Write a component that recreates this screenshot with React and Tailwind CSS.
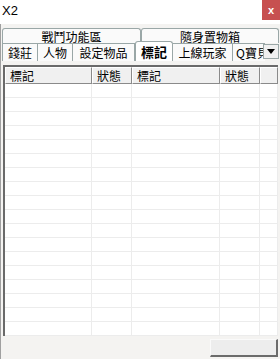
import React from "react";

const font = { fontFamily: '"Noto Sans CJK TC", "Noto Sans CJK SC", sans-serif' };

function TopTab({ children, w }) {
  return (
    <div
      className={`${w} h-[15px] border border-b-0 border-[#9aa7a7] rounded-t-[3px] bg-[#fafafa] flex items-start justify-center pt-[1px] text-[12px] leading-[13px] text-black`}
    >
      {children}
    </div>
  );
}

function Tab({ children, w, selected }) {
  if (selected) {
    return (
      <div
        className={`${w} h-[20px] border border-b-0 border-[#9aa7a7] rounded-t-[3px] bg-white flex items-center justify-center text-[13px] leading-[13px] font-bold text-black relative z-10`}
      >
        {children}
      </div>
    );
  }
  return (
    <div
      className={`${w} h-[18px] border border-b-0 border-l-0 border-[#9aa7a7] bg-[#fafafa] flex items-center justify-center text-[12px] leading-[12px] text-black`}
    >
      {children}
    </div>
  );
}

function HeaderCell({ children, w }) {
  return (
    <div
      className={`${w} h-[17px] bg-[#f0f0f0] border-t border-l border-white border-r border-b border-r-[#8a8a8a] border-b-[#8a8a8a] flex items-center pl-[4px] text-[12px] leading-[12px] text-black overflow-hidden`}
    >
      {children}
    </div>
  );
}

export default function App() {
  const rows = Array.from({ length: 18 });
  const cols = ["w-[87px]", "w-[40px]", "w-[88px]", "w-[40px]", "flex-1"];
  return (
    <div className="w-[280px] h-[359px] bg-[#f4f3f1] flex flex-col overflow-hidden" style={font}>
      <div className="h-[24px] bg-white flex justify-between shrink-0">
        <div className="pl-[2px] pt-[4px] text-[13px] leading-[14px] text-black" style={{ fontFamily: '"Liberation Sans", sans-serif' }}>X2</div>
        <div className="w-[18px] h-[20px] bg-[#c75050] flex items-center justify-center text-white text-[11px] font-bold leading-none" style={{ fontFamily: '"Liberation Sans", sans-serif' }}>x</div>
      </div>
      <div className="flex-1 flex flex-col border-l border-[#a0a0a0]">
        <div className="flex pl-[1px] pt-[4px]">
          <TopTab w="w-[139px]">戰鬥功能區</TopTab>
          <TopTab w="w-[138px]">隨身置物箱</TopTab>
        </div>
        <div className="flex items-end pl-[1px] h-[18px] relative">
          <div className="w-[36px] h-[18px] border border-b-0 border-[#9aa7a7] bg-[#fafafa] flex items-center justify-center text-[12px] leading-[12px]">錢莊</div>
          <Tab w="w-[35px]">人物</Tab>
          <Tab w="w-[62px]">設定物品</Tab>
          <Tab w="w-[38px]" selected>標記</Tab>
          <Tab w="w-[60px]">上線玩家</Tab>
          <div className="w-[32px] h-[18px] border-t border-[#9aa7a7] bg-[#fafafa] flex items-center pl-[3px] text-[12px] leading-[12px] overflow-hidden whitespace-nowrap">Q寶貝</div>
          <div className="absolute right-[1px] top-[1px] w-[16px] h-[15px] bg-[#f0f0f0] border border-[#9aa7a7] flex items-center justify-center">
            <svg width="8" height="5" viewBox="0 0 8 5"><path d="M0 0h8L4 5z" fill="#000" /></svg>
          </div>
        </div>
        <div className="ml-[2px] mr-[2px] mt-[4px] h-[271px] bg-white border-l-2 border-t-2 border-[#6a6a6a] flex flex-col overflow-hidden">
          <div className="flex shrink-0">
            <HeaderCell w="w-[87px]">標記</HeaderCell>
            <HeaderCell w="w-[40px]">狀態</HeaderCell>
            <HeaderCell w="w-[88px]">標記</HeaderCell>
            <HeaderCell w="w-[40px]">狀態</HeaderCell>
            <HeaderCell w="flex-1"></HeaderCell>
          </div>
          {rows.map((_, i) => (
            <div key={i} className="flex h-[14px] shrink-0 border-b border-[#ececec]">
              {cols.map((c, j) => (
                <div key={j} className={`${c} h-full border-r border-[#ececec]`} />
              ))}
            </div>
          ))}
        </div>
        <div className="flex justify-end pr-[2px] pt-[3px]">
          <div className="w-[68px] h-[18px] bg-[#ededed] border-t border-l border-[#fafafa] border-r-2 border-b-2 border-r-[#6b6b6b] border-b-[#6b6b6b]" />
        </div>
      </div>
    </div>
  );
}
